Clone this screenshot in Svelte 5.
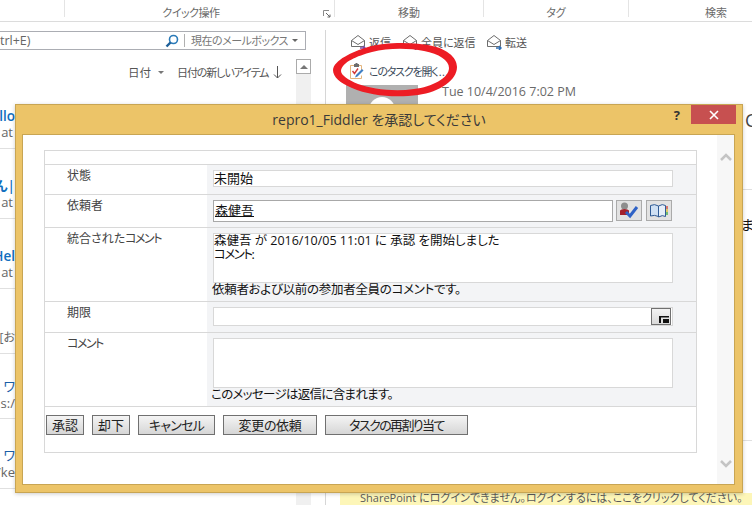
<script>
  const groups = [
    { name: '', cls: 'g0' },
    { name: 'クイック操作', cls: 'g1' },
    { name: '移動', cls: 'g2' },
    { name: 'タグ', cls: 'g3' },
    { name: '検索', cls: 'g4' }
  ];
  const rows = [
    { cls: 'r1', main: 'llo', sub: 'at' },
    { cls: 'r1', main: 'えん|', sub: 'at' },
    { cls: 'r1', main: 'Hel', sub: 'at' },
    { cls: 'r2', main: '', sub: '[お' },
    { cls: 'r3', main: ': ワ', sub: 's:/' },
    { cls: 'r4', main: ': ワ', sub: '/ke' }
  ];
  const actions = [
    { id: 'w38', label: '承認' },
    { id: 'w38', label: '却下' },
    { id: 'w77', label: 'キャンセル' },
    { id: 'w94', label: '変更の依頼' },
    { id: 'w143', label: 'タスクの再割り当て' }
  ];
</script>

{#snippet envelope(arrow)}
  <svg class="env" viewBox="0 0 16 16" width="16" height="16" fill="none">
    <path d="M1.5 6.5 8 1.5l6.5 5v6h-13z" stroke="#6d6d6d"/>
    <path d="M1.5 6.5 8 10.5l6.5-4" stroke="#6d6d6d"/>
    <path d="M10 14h5M13 12l2 2-2 2" stroke={arrow} stroke-width="1.5"/>
  </svg>
{/snippet}

<div class="app">
  <header class="ribbon">
    {#each groups as g}
      <div class="group {g.cls}">
        <span>{g.name}</span>
        {#if g.cls === 'g1'}
          <svg class="launcher" viewBox="0 0 8 8" width="8" height="8" fill="none">
            <path d="M.5 6V.5H6" stroke="#8a8a8a"/>
            <path d="M3 3l4 4M7 4.5V7H4.5" stroke="#666"/>
          </svg>
        {/if}
      </div>
    {/each}
  </header>

  <div class="main">
    <section class="left">
      <div class="search">
        <span class="hint">trl+E)</span>
        <svg class="glass" viewBox="0 0 14 14" width="14" height="14" fill="none">
          <circle cx="8.5" cy="5.5" r="4" stroke="#2a7ab8" stroke-width="1.6"/>
          <path d="M5.5 8.5 1.5 12.5" stroke="#1d5f98" stroke-width="2.4"/>
        </svg>
        <span class="scope">現在のメールボックス</span>
        <span class="caret"></span>
      </div>
      <div class="sort">
        <span class="sortdate">日付</span><span class="caret small"></span>
        <span class="order">日付の新しいアイテム</span>
        <svg class="arrow" viewBox="0 0 9 13" width="9" height="13" fill="none">
          <path d="M4.500 0v12M1 8.500l3.500 3.500L8 8.500" stroke="#555"/>
        </svg>
      </div>
      <div class="listwrap">
        <div class="list">
          {#each rows as r}
            <div class="row {r.cls}">
              <div class="clip">
                {#if r.main}<b>{r.main}</b>{/if}
                <i>{r.sub}</i>
              </div>
            </div>
          {/each}
        </div>
        <div class="scroll">
          <div class="scrollup"><span></span></div>
        </div>
      </div>
    </section>

    <section class="pane">
      <div class="cmds">
        <span class="cmd c1">{@render envelope('#7a4aa8')}返信</span>
        <span class="cmd c2">{@render envelope('#7a4aa8')}全員に返信</span>
        <span class="cmd">{@render envelope('#2f6fb5')}転送</span>
      </div>
      <div class="task">
        <svg viewBox="0 0 14 16" width="14" height="16" fill="none">
          <path d="M3.5 2.5h-3v13h11v-3" stroke="#e4b47c"/>
          <path d="M.5 2.5h11v5" stroke="#e4b47c"/>
          <rect x="4" y="1" width="5" height="3" fill="#6d6d6d"/>
          <rect x="5.5" y="0" width="2" height="2" fill="#6d6d6d"/>
          <path d="M2.5 8 4.500 10.500 8 5.500" stroke="#d23b3b" stroke-width="1.4"/>
          <path d="M5 14.500 6 12l6-6 1.500 1.500-6 6z" fill="#3f7fc4"/>
        </svg>
        <span class="tasktext">このタスクを開く<span class="dots">...</span></span>
      </div>
      <div class="sender">
        <div class="avatar"><span></span></div>
        <span class="date">Tue 10/4/2016 7:02 PM</span>
      </div>
      <div class="content">
        <div class="sliver">
          <span class="big">C</span>
          <span class="rule first"></span>
          <span class="jp">ま</span>
          <span class="rule second"></span>
        </div>
      </div>
      <div class="warn">SharePoint にログインできません。ログインするには、ここをクリックしてください。</div>
    </section>
  </div>

  <svg class="scribble" viewBox="0 0 752 505" width="752" height="505">
    <path fill="#ed1c24" fill-rule="evenodd"
      d="M333 70C334 60 352 52 368 47 385 42 410 42 428 45 446 48 457 57 457 67 457 80 440 92 418 95 396 98 370 96 352 88 340 83 333 77 333 70Z
         M341 71C342 62 357 56 372 52 388 48 408 48 424 51 439 54 449 60 449 68 449 78 432 87 414 89 394 92 372 89 358 84 348 80 341 75 341 71Z"/>
  </svg>

  <div class="modal">
    <div class="titlebar">
      <span class="title">repro1_Fiddler を承認してください</span>
      <span class="help">?</span>
      <span class="close">
        <svg viewBox="0 0 10 10" width="10" height="10" fill="none">
          <path d="M1 1l8 8M9 1 1 9" stroke="#fff" stroke-width="1.6"/>
        </svg>
      </span>
    </div>
    <div class="inner">
      <div class="pagebody">
        <div class="form">
          <div class="head"></div>

          <div class="frow h30">
            <div class="label">状態</div>
            <div class="field"><div class="box single">未開始</div></div>
          </div>

          <div class="frow h33">
            <div class="label">依頼者</div>
            <div class="field people">
              <div class="box person"><u>森健吾</u></div>
              <button class="iconbtn first" aria-label="名前の確認">
                <svg viewBox="0 0 20 17" width="20" height="17" fill="none">
                  <circle cx="5.500" cy="4" r="3.500" fill="#8d8d8d"/>
                  <path d="M1 13V8.500q1-1.500 4.500-1.500t4.500 1.500V13z" fill="#a3202c"/>
                  <path d="M7 10l4 4 7-9" stroke="#2f62c6" stroke-width="3"/>
                </svg>
              </button>
              <button class="iconbtn" aria-label="アドレス帳">
                <svg viewBox="0 0 20 15" width="20" height="15" fill="none">
                  <path d="M1.500 2.500q4-2 8 .5v10.500q-4-2-8-.5z" fill="#cfe0f3" stroke="#2f5a94"/>
                  <path d="M9.500 3q4-2.500 7-.5v11q-3-2-7 .5z" fill="#e6eff9" stroke="#2f5a94"/>
                  <path d="M18 3v3" stroke="#d2554a" stroke-width="1.500"/>
                  <path d="M18 6v3" stroke="#dfc23c" stroke-width="1.500"/>
                  <path d="M18 9v3" stroke="#4caf50" stroke-width="1.500"/>
                </svg>
              </button>
            </div>
          </div>

          <div class="frow h74">
            <div class="label">統合された<span class="kana">コメント</span></div>
            <div class="field">
              <div class="box area">森健吾 が 2016/10/05 11:01 に 承認 を開始しました<br/><span class="kana">コメント</span>:</div>
              <div class="note n1">依頼者および以前の参加者全員のコメントです。</div>
            </div>
          </div>

          <div class="frow h31">
            <div class="label">期限</div>
            <div class="field">
              <div class="box dateinput">
                <span class="picker">
                  <svg viewBox="0 0 10 7" width="10" height="7"><path d="M0 0h10v1.500H0zM0 1.500h2V7H0zM4 3h6v4H4z" fill="#111"/></svg>
                </span>
              </div>
            </div>
          </div>

          <div class="frow h74">
            <div class="label"><span class="kana">コメント</span></div>
            <div class="field">
              <div class="box area"></div>
              <div class="note n2">このメッセージは返信に含まれます。</div>
            </div>
          </div>

          <div class="actions">
            {#each actions as a}
              <button class="action {a.id}">{a.label}</button>
            {/each}
          </div>
        </div>
      </div>
      <div class="vbar">
        <svg viewBox="0 0 12 8" width="12" height="8" fill="none"><path d="M1 7l5-5 5 5" stroke="#c4c4c4" stroke-width="2.500"/></svg>
        <svg viewBox="0 0 12 8" width="12" height="8" fill="none"><path d="M1 1l5 5 5-5" stroke="#c4c4c4" stroke-width="2.500"/></svg>
      </div>
    </div>
  </div>
</div>

<style>
  :global(body) {
    margin: 0;
    background: #fff;
  }
  * {
    box-sizing: border-box;
  }
  .app {
    position: relative;
    width: 752px;
    height: 505px;
    overflow: hidden;
    background: #fff;
    font-family: "Open Sans", "Noto Sans CJK JP", sans-serif;
    font-feature-settings: "palt";
    font-size: 12px;
    color: #444;
    display: flex;
    flex-direction: column;
  }

  /* ribbon */
  .ribbon {
    display: flex;
    height: 22px;
    flex: none;
    border-bottom: 1px solid #dcdcdc;
  }
  .group {
    display: flex;
    justify-content: center;
    align-items: flex-start;
    height: 17px;
    line-height: 25px;
    border-right: 1px solid #e4e4e4;
    color: #6a6a6a;
    font-size: 11px;
    white-space: nowrap;
  }
  .g0 { width: 65px; }
  .g1 { width: 270px; padding-right: 17px; position: relative; letter-spacing: -0.5px; }
  .g2 { width: 149px; }
  .g3 { width: 145px; }
  .g4 { flex: 1; border-right: 0; padding-left: 51px; }
  .launcher {
    position: absolute;
    right: 3px;
    top: 10px;
  }

  .main {
    flex: 1;
    display: flex;
    min-height: 0;
  }

  /* left column */
  .left {
    width: 325px;
    flex: none;
    display: flex;
    flex-direction: column;
  }
  .search {
    margin-top: 9px;
    width: 306px;
    height: 19px;
    border: 1px solid #abadb3;
    border-left: 0;
    display: flex;
    align-items: center;
    color: #666;
  }
  .hint {
    width: 165px;
    font-size: 12.500px;
    flex: none;
    line-height: 17px;
  }
  .glass {
    flex: none;
  }
  .scope {
    margin-left: 5px;
    padding-left: 6px;
    border-left: 1px solid #b0b0b0;
    line-height: 13px;
    width: 102px;
    flex: none;
    font-size: 11px;
    letter-spacing: -0.5px;
    white-space: nowrap;
    color: #777;
  }
  .caret {
    width: 0;
    height: 0;
    margin-left: 6px;
    border: 3px solid transparent;
    border-top: 3px solid #666;
    border-bottom: 0;
  }
  .caret.small {
    margin-left: 7px;
    border-top-color: #777;
  }
  .sort {
    height: 30px;
    margin-top: 7px;
    padding-left: 128px;
    display: flex;
    align-items: center;
    font-size: 11px;
    color: #555;
    white-space: nowrap;
  }
  .sortdate {
    font-size: 11.500px;
  }
  .order {
    margin-left: 13px;
    letter-spacing: -1.100px;
  }
  .arrow {
    margin-left: 5px;
    flex: none;
  }
  .listwrap {
    flex: 1;
    display: flex;
    min-height: 0;
    margin-top: -28px;
  }
  .list {
    width: 296px;
    flex: none;
    padding-top: 20px;
  }
  .row {
    height: 70px;
    border-bottom: 1px solid #e0e0e0;
  }
  .row.r2,
  .row.r3 {
    height: 65px;
  }
  .clip {
    width: 15px;
    height: 100%;
    overflow: hidden;
    display: flex;
    flex-direction: column;
    align-items: flex-end;
    white-space: nowrap;
    line-height: 16px;
  }
  .r1 .clip { padding-top: 29px; }
  .r2 .clip { padding-top: 41px; }
  .r3 .clip { padding-top: 24px; }
  .r4 .clip { padding-top: 28px; }
  .clip b {
    color: #106ebe;
    font-size: 13.500px;
    font-weight: 600;
  }
  .r3 b, .r4 b {
    font-weight: 400;
    font-size: 13px;
    color: #1a5ea6;
  }
  .clip i {
    font-style: normal;
    color: #666;
    font-size: 13px;
    padding-right: 2px;
  }
  .r2 i {
    font-size: 12px;
    padding-right: 0;
  }
  .r3 i, .r4 i {
    margin-top: 1px;
    padding-right: 0;
  }
  .scroll {
    width: 15px;
    flex: none;
    background: #f0f0f0;
  }
  .scrollup {
    height: 15px;
    border: 1px solid #ababab;
    background: #fff;
    display: flex;
    align-items: center;
    justify-content: center;
  }
  .scrollup span {
    border: 4px solid transparent;
    border-bottom: 4px solid #777;
    border-top: 0;
  }

  /* reading pane */
  .pane {
    flex: 1;
    min-width: 0;
    margin-top: 8px;
    border-left: 1px solid #d6d6d6;
    display: flex;
    flex-direction: column;
  }
  .cmds {
    display: flex;
    height: 20px;
    margin-top: 2px;
    padding-left: 24px;
    align-items: center;
    color: #555;
    font-size: 11px;
    white-space: nowrap;
  }
  .cmd {
    display: flex;
    align-items: center;
    gap: 3px;
  }
  .c1 { width: 52px; }
  .c2 { width: 84px; }
  .task {
    margin-top: 9px;
    height: 20px;
    padding-left: 24px;
    display: flex;
    align-items: center;
    gap: 5px;
    font-size: 11px;
    color: #3b4a5a;
    white-space: nowrap;
  }
  .tasktext {
    letter-spacing: -1.200px;
  }
  .dots {
    letter-spacing: 0.500px;
    margin-left: 1px;
  }
  .sender {
    margin-top: 4px;
    height: 20px;
    padding-left: 20px;
    display: flex;
    align-items: flex-start;
    flex: none;
  }
  .avatar {
    width: 72px;
    height: 20px;
    background: #b0b0b0;
    overflow: hidden;
    display: flex;
    justify-content: center;
  }
  .avatar span {
    width: 26px;
    height: 26px;
    border-radius: 50%;
    background: #fff;
    margin-top: 12px;
  }
  .date {
    margin-left: 24px;
    line-height: 14px;
    font-size: 12.500px;
    color: #6a6a6a;
    white-space: nowrap;
  }
  .content {
    flex: 1;
    min-height: 0;
    display: flex;
    justify-content: flex-end;
  }
  .sliver {
    width: 9px;
    overflow: hidden;
    display: flex;
    flex-direction: column;
  }
  .big {
    font-size: 18px;
    line-height: 24px;
    margin-top: 3px;
    margin-left: 2px;
    color: #444;
  }
  .rule {
    height: 1px;
    background: #e0e0e0;
    flex: none;
  }
  .first { margin-top: 57px; }
  .jp {
    margin-top: 27px;
    font-size: 14px;
    line-height: 16px;
    color: #111;
    margin-left: -2px;
    white-space: nowrap;
  }
  .second { margin-top: 207px; }
  .warn {
    flex: none;
    height: 12px;
    margin-left: 14px;
    padding-left: 20px;
    background: #fdf6b8;
    font-size: 11px;
    line-height: 9px;
    color: #5a5a5a;
    overflow: hidden;
    white-space: nowrap;
  }

  .scribble {
    position: absolute;
    left: 0;
    top: 0;
    pointer-events: none;
  }

  /* modal */
  .modal {
    position: absolute;
    left: 15px;
    top: 104px;
    width: 728px;
    height: 389px;
    background: #ecc468;
    border: 1px solid #c8a553;
    padding: 0 7px 7px 6px;
    display: flex;
    flex-direction: column;
    box-shadow: 0 1px 4px rgba(0, 0, 0, 0.2);
  }
  .titlebar {
    height: 29px;
    flex: none;
    display: flex;
    position: relative;
    justify-content: center;
  }
  .title {
    font-size: 14px;
    line-height: 29px;
    color: #3a3a3a;
    padding-left: 1px;
  }
  .help {
    position: absolute;
    right: 55px;
    top: 1px;
    font-weight: 700;
    font-size: 13px;
    color: #333;
    line-height: 18px;
  }
  .close {
    position: absolute;
    right: -1px;
    top: 0;
    width: 45px;
    height: 19px;
    background: #c75050;
    display: flex;
    align-items: center;
    justify-content: center;
  }
  .inner {
    flex: 1;
    min-height: 0;
    background: #fff;
    border: 1px solid #c8a553;
    display: flex;
  }
  .pagebody {
    flex: 1;
    padding: 15px 0 0 21px;
    min-width: 0;
  }
  .vbar {
    width: 17px;
    flex: none;
    background: #f7f7f7;
    display: flex;
    flex-direction: column;
    align-items: center;
    justify-content: space-between;
    padding: 18px 0 16px;
  }

  .form {
    width: 653px;
    border: 1px solid #d8d8d8;
    color: #111;
  }
  .head {
    height: 13px;
  }
  .frow {
    border-top: 1px solid #d8d8d8;
    display: grid;
    grid-template-columns: 162px 1fr;
  }
  .h30 { height: 30px; }
  .h33 { height: 33px; }
  .h74 { height: 74px; }
  .h31 { height: 31px; }
  .label {
    padding: 3px 0 0 22px;
    font-size: 12px;
    line-height: 16px;
    color: #444;
  }
  .kana {
    letter-spacing: -1.5px;
  }
  .field {
    background: #f3f4f6;
    padding: 5px 0 0 6px;
    font-size: 12.500px;
    color: #111;
  }
  .box {
    background: #fff;
    border: 1px solid #d8d8d8;
    width: 460px;
    line-height: 14px;
  }
  .single {
    height: 17px;
    line-height: 15px;
    font-size: 13px;
  }
  .people {
    display: flex;
    align-items: flex-start;
  }
  .person {
    width: 400px;
    height: 22px;
    border-color: #a8a8a8;
    padding-left: 1px;
    line-height: 18px;
    font-size: 13px;
  }
  .iconbtn {
    width: 26px;
    height: 21px;
    margin: 0 0 0 4px;
    padding: 0;
    background: #e2e2e2;
    border: 1px solid #aaa;
    display: flex;
    align-items: center;
    justify-content: center;
  }
  .iconbtn.first {
    margin-left: 3px;
  }
  .area {
    height: 50px;
    white-space: pre-line;
  }
  .note {
    line-height: 14px;
    white-space: nowrap;
    font-size: 12.500px;
  }
  .n1 { margin-left: -1px; letter-spacing: -0.3px; }
  .n2 { margin-left: -2px; letter-spacing: -0.7px; }
  .dateinput {
    height: 19px;
    display: flex;
    justify-content: flex-end;
    padding-right: 1px;
  }
  .picker {
    width: 20px;
    height: 17px;
    background: linear-gradient(#f2f2f2, #d9d9d9);
    border: 1px solid #707070;
    display: flex;
    align-items: flex-end;
    justify-content: flex-end;
    padding: 0 1px 1px 0;
  }
  .actions {
    height: 46px;
    border-top: 1px solid #d8d8d8;
    display: flex;
    gap: 8px;
    padding: 8px 0 0 1px;
    align-items: flex-start;
  }
  .action {
    height: 20px;
    margin: 0;
    padding: 0;
    font: inherit;
    font-size: 13px;
    line-height: 16px;
    color: #222;
    background: linear-gradient(#f4f4f4, #d6d6d6);
    border: 1px solid #707070;
  }
  .w38 { width: 38px; }
  .w77 { width: 77px; letter-spacing: -0.8px; }
  .w94 { width: 94px; letter-spacing: -0.3px; }
  .w143 { width: 143px; letter-spacing: -1.6px; }
</style>
